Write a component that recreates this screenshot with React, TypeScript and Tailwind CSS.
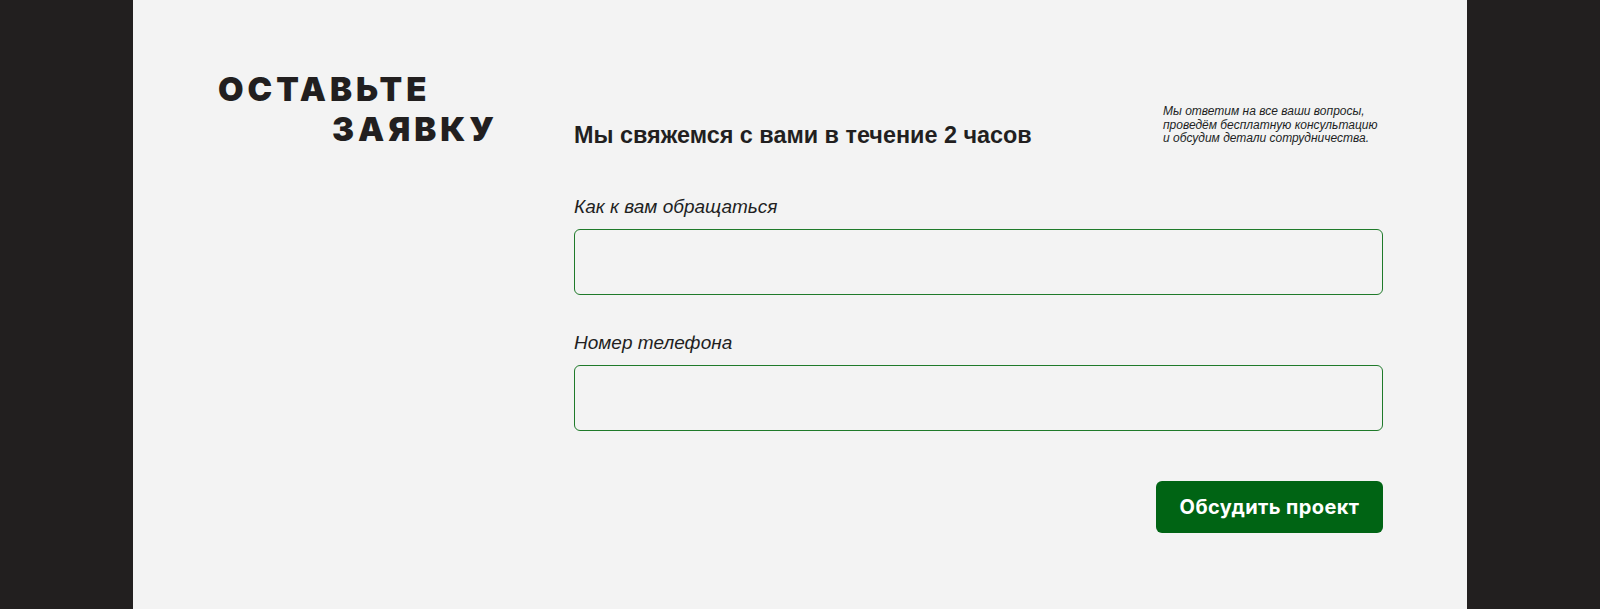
import React from 'react';

const FieldGroup: React.FC<{ label: string; type?: string }> = ({ label, type = 'text' }) => (
    <label className="flex flex-col">
        <span className="text-[19px] italic leading-[24px] text-[#221f1f]">{label}</span>
        <input
            type={type}
            className="mt-[10px] h-[66px] w-full rounded-[6px] border border-[#1f7a2a] bg-transparent px-4 text-[18px] outline-none"
        />
    </label>
);

export default function App() {
    return (
        <div className="flex min-h-[609px] w-full justify-center bg-[#221f1f]" style={{ fontFamily: '"Liberation Sans", Arial, sans-serif' }}>
            <div className="flex h-[609px] w-[1334px] bg-[#f3f3f3] pl-[85px] pr-[84px]">
                <div className="w-[356px] shrink-0 pt-[69px]">
                    <h2 className="w-[276px] font-['Inter',sans-serif] text-[33px] font-black uppercase leading-[40px] tracking-[0.12em] text-[#221f1f]">
                        <span className="block">Оставьте</span>
                        <span className="-mr-[4px] block text-right">заявку</span>
                    </h2>
                </div>
                <div className="flex flex-1 flex-col pt-[105px]">
                    <div className="flex items-start justify-between">
                        <h3 className="mt-[17px] text-[23.4px] font-bold leading-[26px] text-[#221f1f]">Мы свяжемся с вами в течение 2 часов</h3>
                        <p className="w-[220px] text-[12px] italic leading-[13.5px] text-[#221f1f]">
                            Мы ответим на все ваши вопросы, проведём бесплатную консультацию и обсудим детали сотрудничества.
                        </p>
                    </div>
                    <div className="mt-[47px] flex flex-col gap-[36px]">
                        <FieldGroup label="Как к вам обращаться" />
                        <FieldGroup label="Номер телефона" type="tel" />
                    </div>
                    <div className="mt-[50px] flex justify-end">
                        <button className="h-[52px] w-[227px] rounded-[6px] bg-[#006414] font-['Inter',sans-serif] text-[20px] font-bold tracking-[0.02em] text-white">
                            Обсудить проект
                        </button>
                    </div>
                </div>
            </div>
        </div>
    );
}
